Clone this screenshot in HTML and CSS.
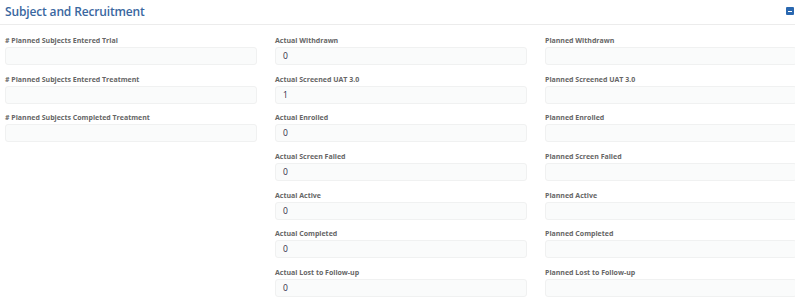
FILE: index.html
```html
<!DOCTYPE html>
<html lang="en">
<head>
  <meta charset="UTF-8">
  <meta name="viewport" content="width=device-width, initial-scale=1.0">
  <title>Subject and Recruitment</title>
  <link rel="stylesheet" href="styles.css">
</head>
<body>
  <div class="panel">
    <div class="panel-header">
      <h2>Subject and Recruitment</h2>
      <button class="collapse-btn" type="button" aria-label="Collapse"><span></span></button>
    </div>
    <div class="panel-body">
      <div class="column">
        <div class="field">
          <label># Planned Subjects Entered Trial</label>
          <div class="input"></div>
        </div>
        <div class="field">
          <label># Planned Subjects Entered Treatment</label>
          <div class="input"></div>
        </div>
        <div class="field">
          <label># Planned Subjects Completed Treatment</label>
          <div class="input"></div>
        </div>
      </div>
      <div class="column">
        <div class="field">
          <label>Actual Withdrawn</label>
          <div class="input">0</div>
        </div>
        <div class="field">
          <label>Actual Screened UAT 3.0</label>
          <div class="input">1</div>
        </div>
        <div class="field">
          <label>Actual Enrolled</label>
          <div class="input">0</div>
        </div>
        <div class="field">
          <label>Actual Screen Failed</label>
          <div class="input">0</div>
        </div>
        <div class="field">
          <label>Actual Active</label>
          <div class="input">0</div>
        </div>
        <div class="field">
          <label>Actual Completed</label>
          <div class="input">0</div>
        </div>
        <div class="field">
          <label>Actual Lost to Follow-up</label>
          <div class="input">0</div>
        </div>
      </div>
      <div class="column">
        <div class="field">
          <label>Planned Withdrawn</label>
          <div class="input"></div>
        </div>
        <div class="field">
          <label>Planned Screened UAT 3.0</label>
          <div class="input"></div>
        </div>
        <div class="field">
          <label>Planned Enrolled</label>
          <div class="input"></div>
        </div>
        <div class="field">
          <label>Planned Screen Failed</label>
          <div class="input"></div>
        </div>
        <div class="field">
          <label>Planned Active</label>
          <div class="input"></div>
        </div>
        <div class="field">
          <label>Planned Completed</label>
          <div class="input"></div>
        </div>
        <div class="field">
          <label>Planned Lost to Follow-up</label>
          <div class="input"></div>
        </div>
      </div>
    </div>
  </div>
</body>
</html>
```

FILE: styles.css
```css
body {
  font-family: "Open Sans", "Liberation Sans", sans-serif;
  background-color: #fff;
  margin: 0;
  padding: 0;
  overflow: hidden;
}
.panel {
  width: 797px;
}
.panel-header {
  display: flex;
  justify-content: space-between;
  align-items: flex-start;
  height: 25px;
  padding: 2px 3px 0 5px;
  box-sizing: border-box;
  border-bottom: 1px solid #ececec;
}
.panel-header h2 {
  margin: 0;
  font-size: 12px;
  line-height: 20px;
  font-weight: 600;
  color: #3a67a0;
  letter-spacing: -0.15px;
}
.collapse-btn {
  display: flex;
  align-items: center;
  justify-content: center;
  width: 8px;
  height: 8px;
  margin-top: 5px;
  padding: 0;
  border: none;
  border-radius: 1px;
  background-color: #2a68b0;
  cursor: pointer;
}
.collapse-btn span {
  display: block;
  width: 4px;
  height: 1px;
  background-color: #fff;
}
.panel-body {
  display: grid;
  grid-template-columns: 252px 252px 252px;
  column-gap: 18px;
  padding: 10px 0 0 5px;
}
.field {
  margin-bottom: 8.7px;
}
label {
  display: block;
  font-size: 7px;
  line-height: 11px;
  font-weight: 700;
  color: #666;
  margin-bottom: 1px;
}
.input {
  height: 18px;
  box-sizing: border-box;
  padding: 0 7px;
  font-size: 8.5px;
  line-height: 16px;
  color: #2e2a45;
  background-color: #fafbfb;
  border: 1px solid #f0f1f1;
  border-radius: 3px;
}
```
